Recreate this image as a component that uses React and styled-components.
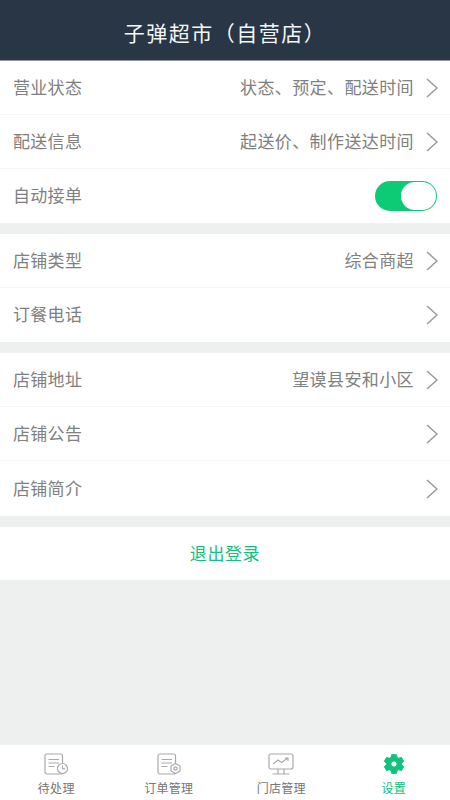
import React from 'react';
import styled, { createGlobalStyle } from 'styled-components';

const GlobalStyle = createGlobalStyle`
  html, body {
    margin: 0;
    padding: 0;
    background: #eef0ef;
    font-family: "Noto Sans CJK SC", "Noto Sans", sans-serif;
  }
  * {
    box-sizing: border-box;
  }
`;

const Page = styled.div`
  width: 450px;
  height: 800px;
  display: flex;
  flex-direction: column;
  background: #eef0ef;
  overflow: hidden;
`;

const Header = styled.header`
  height: 61px;
  flex-shrink: 0;
  background: #283646;
  border-bottom: 1px solid #8d979f;
  color: #f4f5f6;
  font-size: 21px;
  letter-spacing: 1.5px;
  display: flex;
  align-items: center;
  justify-content: center;
  padding-top: 4px;
`;

const Content = styled.main`
  flex: 1;
`;

const Group = styled.section`
  background: #fff;
  margin-bottom: 11px;
`;

const Row = styled.div`
  height: ${(props) => props.$height || 54}px;
  display: flex;
  align-items: center;
  padding: 0 12px 1px 13px;
  border-bottom: ${(props) => (props.$last ? 'none' : '1px solid #f6f6f6')};
`;

const Label = styled.span`
  font-size: 17px;
  letter-spacing: 0.3px;
  color: #808080;
  flex: 1;
  margin-bottom: 2px;
`;

const Value = styled.span`
  font-size: 17px;
  letter-spacing: 0.4px;
  color: #808080;
  margin-bottom: 2px;
`;

const Chevron = styled.svg`
  width: 12px;
  height: 20px;
  margin: 1px 0 0 12px;
  flex-shrink: 0;
`;

const Toggle = styled.div`
  width: 62px;
  height: 30px;
  border-radius: 15px;
  background: #0ccb74;
  position: relative;
  right: 1px;
`;

const Knob = styled.div`
  position: absolute;
  right: 1px;
  top: 1px;
  width: 35px;
  height: 28px;
  border-radius: 14px;
  background: #fff;
`;

const Logout = styled.button`
  width: 100%;
  height: 53px;
  border: none;
  background: #fff;
  color: #10c27c;
  font-family: inherit;
  font-size: 17px;
  letter-spacing: 0.6px;
  padding: 0 0 2px;
  display: block;
`;

const TabBar = styled.nav`
  height: 55px;
  flex-shrink: 0;
  background: #fff;
  display: grid;
  grid-template-columns: repeat(4, 1fr);
  padding-top: 8px;
`;

const Tab = styled.div`
  display: flex;
  flex-direction: column;
  align-items: center;
  color: ${(props) => (props.$active ? '#10c27c' : '#747474')};
  font-size: 12px;
  letter-spacing: 0.3px;
  line-height: 16px;
`;

const TabIcon = styled.svg`
  width: 26px;
  height: 22px;
  margin-bottom: 5px;
  display: block;
`;

const Arrow = () => (
  <Chevron viewBox="0 0 12 20" fill="none" stroke="#999" strokeWidth="1.5">
    <path d="M1 1 L11 10 L1 19" />
  </Chevron>
);

const SettingRow = ({ label, value, last, height }) => (
  <Row $last={last} $height={height}>
    <Label>{label}</Label>
    {value && <Value>{value}</Value>}
    <Arrow />
  </Row>
);

const DocLines = () => (
  <>
    <rect x="2" y="1" width="17.5" height="20" rx="2" />
    <path d="M5.5 6.5h10.5M5.5 10h10.5M5.5 13.5h6" />
  </>
);

const PendingIcon = () => (
  <TabIcon viewBox="0 0 26 22" fill="none" stroke="#aaa" strokeWidth="1.2">
    <DocLines />
    <circle cx="19.5" cy="15.5" r="5" fill="#fff" />
    <path d="M19.5 12.5v3.2h2.6" />
  </TabIcon>
);

const OrdersIcon = () => (
  <TabIcon viewBox="0 0 26 22" fill="none" stroke="#aaa" strokeWidth="1.2">
    <DocLines />
    <path d="M19.5 10.5l4.5 2.5v5l-4.5 2.5-4.5-2.5v-5z" fill="#fff" />
    <circle cx="19.5" cy="15.5" r="1.7" />
  </TabIcon>
);

const StoreIcon = () => (
  <TabIcon viewBox="0 0 26 22" fill="none" stroke="#aaa" strokeWidth="1.2">
    <rect x="1" y="1" width="24" height="15" rx="2" />
    <path d="M5 11l5-4 3.5 2.5L20 5M17 5h3v3" />
    <path d="M10 16v4.5M16 16v4.5M4.5 21h17" />
  </TabIcon>
);

const SettingsIcon = () => (
  <TabIcon viewBox="0 0 26 22">
    <path
      fill="#10c27c"
      stroke="#10c27c"
      strokeWidth="0.8"
      strokeLinejoin="round"
      fillRule="evenodd"
      d="M10.6 1.5h4.8l.6 2.7 1.7 1 2.7-.9 2.4 4-2.1 1.9v1.6l2.1 1.9-2.4 4-2.7-.9-1.7 1-.6 2.7h-4.8l-.6-2.7-1.7-1-2.7.9-2.4-4 2.1-1.9v-1.6l-2.1-1.9 2.4-4 2.7.9 1.7-1zM13 8a3 3 0 100 6 3 3 0 000-6z"
    />
  </TabIcon>
);

const App = () => (
  <>
    <GlobalStyle />
    <Page>
      <Header>子弹超市（自营店）</Header>
      <Content>
        <Group>
          <SettingRow label="营业状态" value="状态、预定、配送时间" />
          <SettingRow label="配送信息" value="起送价、制作送达时间" />
          <Row $last>
            <Label>自动接单</Label>
            <Toggle>
              <Knob />
            </Toggle>
          </Row>
        </Group>
        <Group>
          <SettingRow label="店铺类型" value="综合商超" />
          <SettingRow label="订餐电话" last />
        </Group>
        <Group>
          <SettingRow label="店铺地址" value="望谟县安和小区" />
          <SettingRow label="店铺公告" />
          <SettingRow label="店铺简介" last height={55} />
        </Group>
        <Logout>退出登录</Logout>
      </Content>
      <TabBar>
        <Tab>
          <PendingIcon />
          待处理
        </Tab>
        <Tab>
          <OrdersIcon />
          订单管理
        </Tab>
        <Tab>
          <StoreIcon />
          门店管理
        </Tab>
        <Tab $active>
          <SettingsIcon />
          设置
        </Tab>
      </TabBar>
    </Page>
  </>
);

export default App;
